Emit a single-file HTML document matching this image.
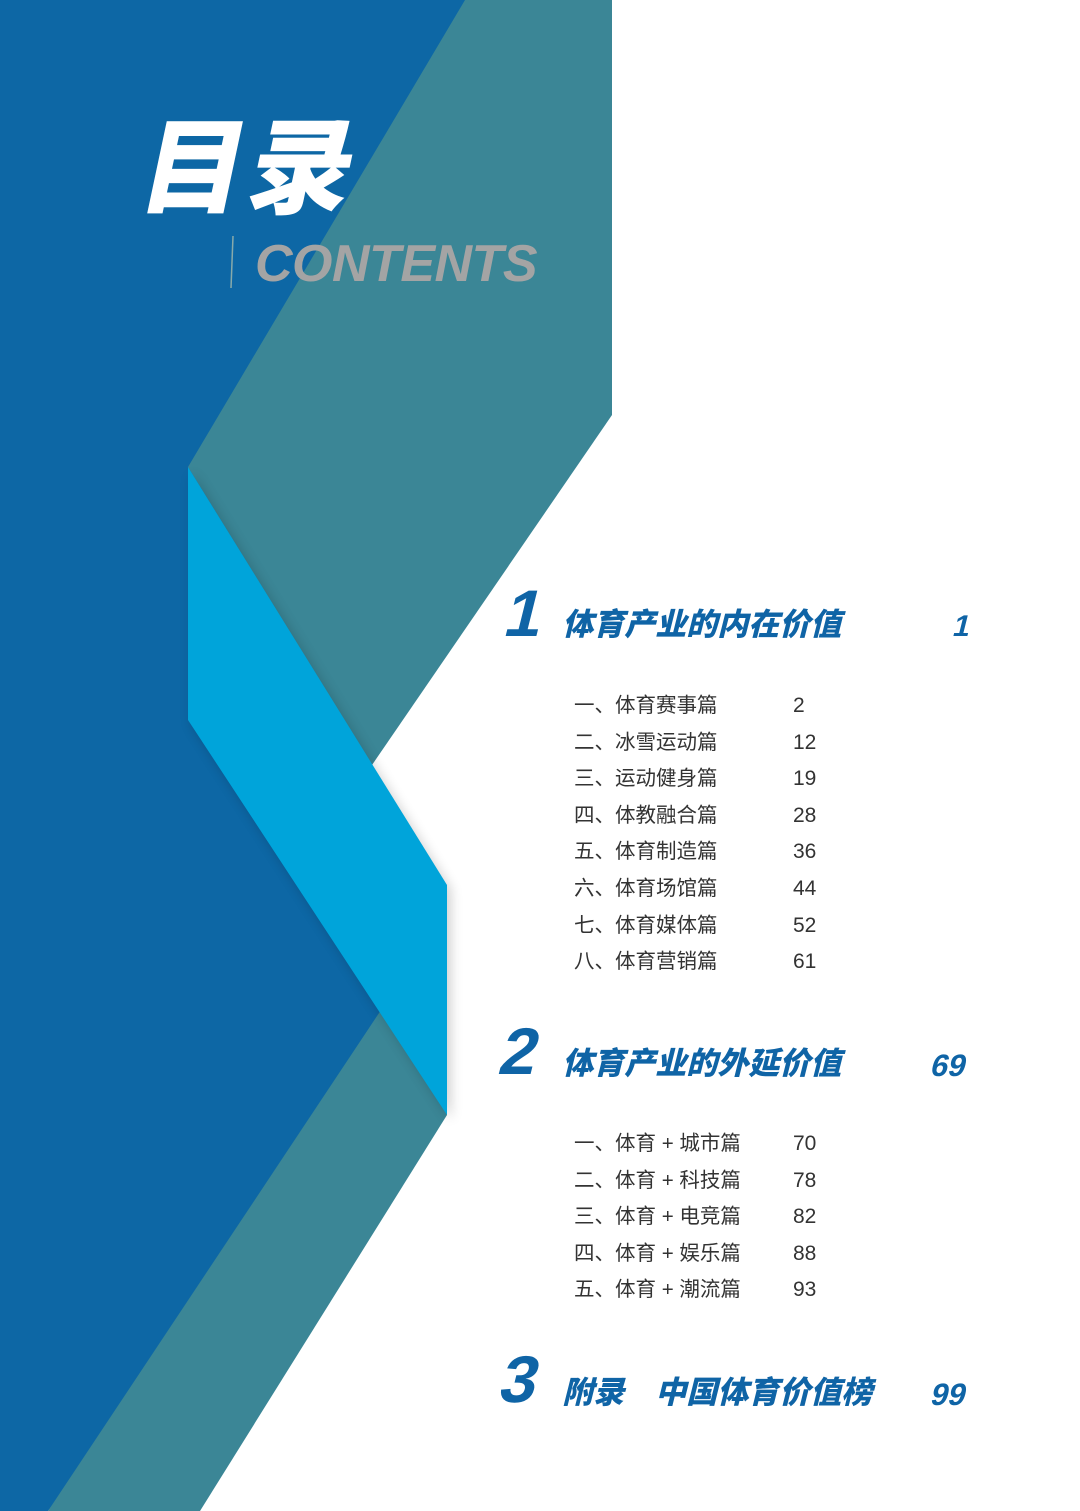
<!DOCTYPE html>
<html><head><meta charset="utf-8"><style>
html,body{margin:0;padding:0}
body{width:1080px;height:1511px;position:relative;overflow:hidden;background:#fff;font-family:"Liberation Sans","Noto Sans CJK SC",sans-serif}
svg{position:absolute;left:0;top:0}
.t{position:absolute;white-space:nowrap;line-height:1}
.h{color:#0f64a6;font-weight:900;font-family:"Liberation Sans","Noto Sans CJK SC",sans-serif;transform:skewX(-14deg);transform-origin:left bottom}
.num{color:#0f64a6;font-weight:900;font-family:"Liberation Sans",sans-serif;transform:skewX(-14deg);transform-origin:left bottom}
.s{color:#333;font-size:20.5px;font-family:"Liberation Sans","Noto Sans CJK SC",sans-serif}
.p{color:#333;font-size:21px;font-family:"Liberation Sans",sans-serif}
</style></head><body>
<svg width="1080" height="1511" viewBox="0 0 1080 1511">
<defs><filter id="sh" x="-20%" y="-20%" width="140%" height="140%"><feGaussianBlur stdDeviation="6"/></filter></defs>
<polygon points="0,0 470,0 300,500 330,800 400,1050 48,1511 0,1511" fill="#0d67a5"/>
<polygon points="465,0 612,0 612,415 372,765 188,467" fill="#3b8696"/>
<polygon points="381,1010 420,1000 447,1115 200,1511 48,1511" fill="#3b8696"/>
<polygon points="192,472 451,890 451,1120 192,725" fill="#000" opacity="0.18" filter="url(#sh)"/>
<polygon points="188,467 447,885 447,1115 188,720" fill="#00a4da"/>
<line x1="233" y1="236" x2="231" y2="288" stroke="#8aa" stroke-width="1.5"/>
</svg>
<div class="t" style="left:145px;top:108px;font-size:104px;color:#fff;font-weight:900;font-family:'Noto Sans CJK SC',sans-serif;transform:skewX(-12deg);letter-spacing:4px">目录</div>
<div class="t" style="left:255px;top:238px;font-size:52px;color:#a4a4a4;font-weight:bold;font-style:italic;letter-spacing:-0.5px">CONTENTS</div>

<div class="t num" style="left:499px;top:580px;font-size:66px">1</div>
<div class="t h" style="left:561px;top:609px;font-size:31px">体育产业的内在价值</div>
<div class="t num" style="left:950px;top:612px;font-size:30px">1</div>

<div class="t s" style="left:574px;top:688px;line-height:36.6px">一、体育赛事篇<br>二、冰雪运动篇<br>三、运动健身篇<br>四、体教融合篇<br>五、体育制造篇<br>六、体育场馆篇<br>七、体育媒体篇<br>八、体育营销篇</div>
<div class="t p" style="left:793px;top:688px;line-height:36.6px">2<br>12<br>19<br>28<br>36<br>44<br>52<br>61</div>

<div class="t num" style="left:494px;top:1018px;font-size:66px">2</div>
<div class="t h" style="left:561px;top:1048px;font-size:31px">体育产业的外延价值</div>
<div class="t num" style="left:928px;top:1050px;font-size:31px">69</div>

<div class="t s" style="left:574px;top:1126px;line-height:36.6px">一、体育 + 城市篇<br>二、体育 + 科技篇<br>三、体育 + 电竞篇<br>四、体育 + 娱乐篇<br>五、体育 + 潮流篇</div>
<div class="t p" style="left:793px;top:1126px;line-height:36.6px">70<br>78<br>82<br>88<br>93</div>

<div class="t num" style="left:494px;top:1346px;font-size:66px">3</div>
<div class="t h" style="left:561px;top:1377px;font-size:31px">附录　中国体育价值榜</div>
<div class="t num" style="left:928px;top:1379px;font-size:31px">99</div>
</body></html>
